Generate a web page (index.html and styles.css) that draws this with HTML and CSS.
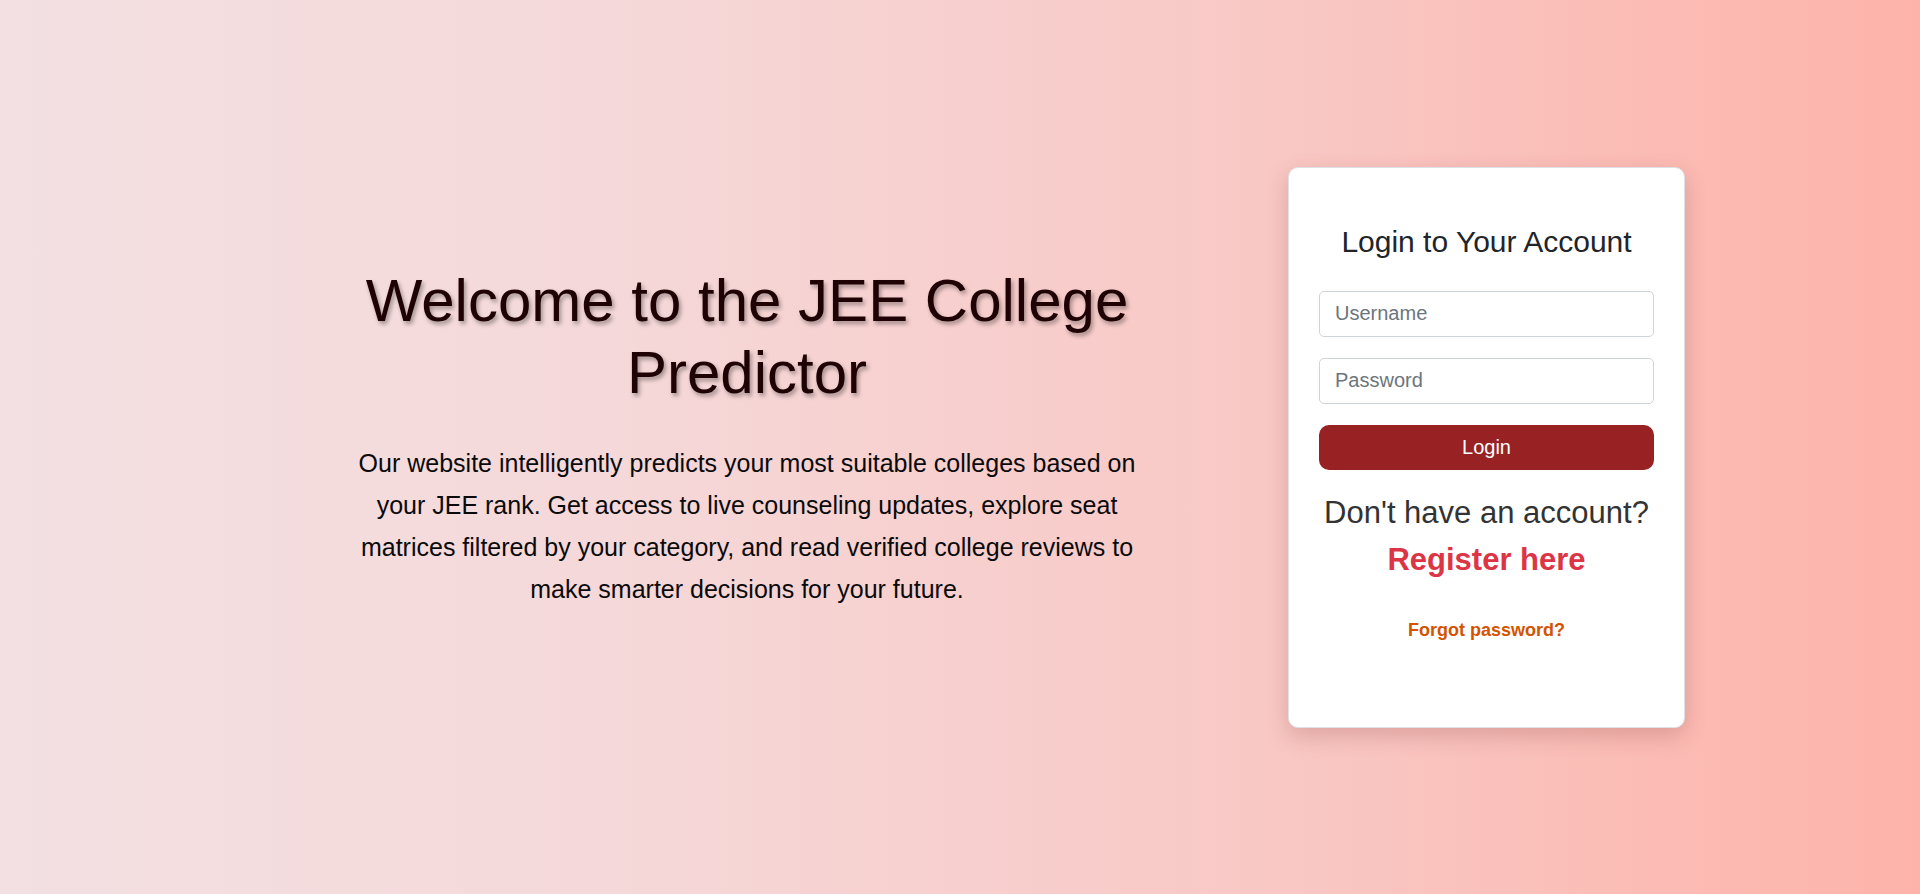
FILE: index.html
```html
<!DOCTYPE html>
<html lang="en">
<head>
<meta charset="utf-8">
<title>JEE College Predictor - Login</title>
<link rel="stylesheet" href="styles.css">
</head>
<body>
<main class="page">
  <section class="hero">
    <h1 class="hero-title">Welcome to the JEE College Predictor</h1>
    <p class="hero-text">Our website intelligently predicts your most suitable colleges based on your JEE rank. Get access to live counseling updates, explore seat matrices filtered by your category, and read verified college reviews to make smarter decisions for your future.</p>
  </section>
  <section class="card">
    <h2 class="card-title">Login to Your Account</h2>
    <form class="login-form">
      <input class="field" type="text" placeholder="Username">
      <input class="field" type="password" placeholder="Password">
      <button class="btn-login" type="button">Login</button>
    </form>
    <p class="register">Don't have an account?<br><a class="register-link" href="#">Register here</a></p>
    <p class="forgot"><a class="forgot-link" href="#">Forgot password?</a></p>
  </section>
</main>
</body>
</html>
```

FILE: styles.css
```css
* { box-sizing: border-box; }

html, body {
  margin: 0;
  padding: 0;
}

body {
  font-family: "Liberation Sans", Arial, sans-serif;
  background: linear-gradient(to right, #f3e0e2 0%, #f5d9da 30%, #f9c6c2 70%, #fdb3a9 100%);
  min-height: 894px;
}

.page {
  height: 894px;
  display: flex;
  align-items: center;
  padding-left: 347px;
  gap: 141px;
}

.hero {
  width: 800px;
  text-align: center;
  padding-bottom: 18px;
}

.hero-title {
  margin: 0 0 34px;
  font-size: 60px;
  line-height: 72px;
  font-weight: 400;
  color: #1e0204;
  text-shadow: 2px 3px 4px rgba(0, 0, 0, 0.35);
}

.hero-text {
  margin: 0;
  font-size: 25px;
  line-height: 41.8px;
  color: #0a0a0a;
}

.card {
  width: 397px;
  height: 561px;
  background: #fff;
  border: 1px solid #dde1e6;
  border-radius: 10px;
  box-shadow: 0 8px 22px rgba(120, 40, 40, 0.22);
  padding: 30px;
  text-align: center;
  display: flex;
  flex-direction: column;
}

.card-title {
  margin: 26px 0 31px;
  font-size: 30px;
  line-height: 36px;
  font-weight: 400;
  color: #212529;
}

.login-form {
  display: flex;
  flex-direction: column;
  gap: 21px;
}

.field {
  width: 100%;
  height: 46px;
  border: 1px solid #ced4da;
  border-radius: 5px;
  padding: 0 15px;
  font-family: inherit;
  font-size: 20px;
  color: #212529;
  background: #fff;
  outline: none;
}

.field::placeholder {
  color: #6c757d;
  opacity: 1;
}

.btn-login {
  width: 100%;
  height: 45px;
  border: none;
  border-radius: 10px;
  background: #972123;
  color: #fff;
  font-family: inherit;
  font-size: 20px;
  padding: 0;
}

.register {
  margin: 19px 0 0;
  font-size: 31px;
  line-height: 47.25px;
  color: #333;
}

.register-link {
  color: #dc3545;
  font-weight: 700;
  text-decoration: none;
}

.forgot {
  margin: 34px 0 0;
  font-size: 18px;
  line-height: 27px;
}

.forgot-link {
  color: #d35400;
  font-weight: 700;
  text-decoration: none;
}
```
